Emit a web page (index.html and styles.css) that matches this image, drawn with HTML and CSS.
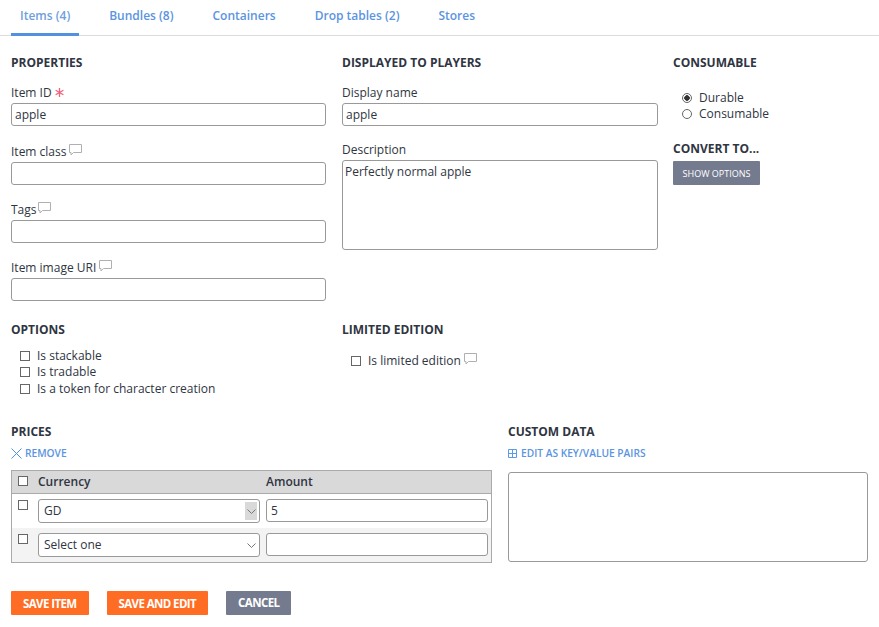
FILE: index.html
```html
<!DOCTYPE html>
<html>
<head>
    <title>Items</title>
    <link rel="stylesheet" href="styles.css">
</head>
<body>
    <nav class="tabs">
        <a class="tab active">Items (4)</a>
        <a class="tab">Bundles (8)</a>
        <a class="tab">Containers</a>
        <a class="tab">Drop tables (2)</a>
        <a class="tab">Stores</a>
    </nav>

    <form class="page">
        <div class="top-grid">
            <section class="col">
                <h3>Properties</h3>
                <div class="field first">
                    <label>Item ID<svg class="star" width="9" height="9" viewBox="0 0 9 9"><path d="M4.500 0v9M.6 2.200l7.800 4.600M8.400 2.200L.6 6.800" stroke="#f4607a" stroke-width="1.300" fill="none"/></svg></label>
                    <input type="text" value="apple">
                </div>
                <div class="field second">
                    <label>Item class<svg class="hint" width="13" height="12" viewBox="0 0 13 12"><path d="M.5.500h12v8H4.500L2 11V8.500H.5z" stroke="#b0b0b0" fill="none"/></svg></label>
                    <input type="text">
                </div>
                <div class="field">
                    <label>Tags<svg class="hint near" width="13" height="12" viewBox="0 0 13 12"><path d="M.5.500h12v8H4.500L2 11V8.500H.5z" stroke="#b0b0b0" fill="none"/></svg></label>
                    <input type="text">
                </div>
                <div class="field">
                    <label>Item image URI<svg class="hint" width="13" height="12" viewBox="0 0 13 12"><path d="M.5.500h12v8H4.500L2 11V8.500H.5z" stroke="#b0b0b0" fill="none"/></svg></label>
                    <input type="text">
                </div>
            </section>

            <section class="col">
                <h3>Displayed to players</h3>
                <div class="field first">
                    <label>Display name</label>
                    <input type="text" value="apple">
                </div>
                <div class="field desc">
                    <label>Description</label>
                    <textarea class="desc-box">Perfectly normal apple</textarea>
                </div>
            </section>

            <section class="col">
                <h3>Consumable</h3>
                <div class="radios">
                    <label class="check"><span class="radio on"></span>Durable</label>
                    <label class="check"><span class="radio"></span>Consumable</label>
                </div>
                <h3 class="convert">Convert to...</h3>
                <button type="button" class="btn grey small">Show options</button>
            </section>
        </div>

        <div class="top-grid options">
            <section class="col">
                <h3>Options</h3>
                <div class="checks">
                    <label class="check"><span class="box"></span>Is stackable</label>
                    <label class="check"><span class="box"></span>Is tradable</label>
                    <label class="check"><span class="box"></span>Is a token for character creation</label>
                </div>
            </section>
            <section class="col">
                <h3>Limited edition</h3>
                <div class="checks limited">
                    <label class="check"><span class="box"></span>Is limited edition<svg class="hint" width="13" height="12" viewBox="0 0 13 12"><path d="M.5.500h12v8H4.500L2 11V8.500H.5z" stroke="#b0b0b0" fill="none"/></svg></label>
                </div>
            </section>
        </div>

        <div class="bottom">
            <section class="prices">
                <h3>Prices</h3>
                <a class="action"><svg width="11" height="11" viewBox="0 0 11 11"><path d="M.5.500l10 10M10.500.500l-10 10" stroke="#4a90ea" fill="none"/></svg>Remove</a>
                <div class="table">
                    <div class="row head">
                        <div class="cell-check"><span class="box"></span></div>
                        <div class="cell-currency">Currency</div>
                        <div class="cell-amount">Amount</div>
                    </div>
                    <div class="row">
                        <div class="cell-check"><span class="box"></span></div>
                        <div class="cell-currency">
                            <div class="select">GD<span class="arrow hover"><svg width="9" height="5" viewBox="0 0 9 5"><path d="M.5.500l4 4 4-4" stroke="#777" fill="none"/></svg></span></div>
                        </div>
                        <div class="cell-amount"><input type="text" value="5"></div>
                    </div>
                    <div class="row alt">
                        <div class="cell-check"><span class="box"></span></div>
                        <div class="cell-currency">
                            <div class="select">Select one<span class="arrow"><svg width="9" height="5" viewBox="0 0 9 5"><path d="M.5.500l4 4 4-4" stroke="#777" fill="none"/></svg></span></div>
                        </div>
                        <div class="cell-amount"><input type="text"></div>
                    </div>
                </div>
            </section>
            <section class="custom">
                <h3>Custom data</h3>
                <a class="action"><svg width="9" height="9" viewBox="0 0 9 9"><path d="M.5.500h8v8h-8zM4.500.500v8M.5 4.500h8" stroke="#5b9be6" fill="none"/></svg>Edit as key/value pairs</a>
                <textarea class="custom-box"></textarea>
            </section>
        </div>

        <div class="buttons">
            <button type="button" class="btn orange">Save item</button>
            <button type="button" class="btn orange">Save and edit</button>
            <button type="button" class="btn grey">Cancel</button>
        </div>
    </form>
</body>
</html>
```

FILE: styles.css
```css
body {
    margin: 0;
    font-family: "Open Sans", sans-serif;
    font-size: 12px;
    line-height: 16px;
    color: #2f3542;
    background: #fff;
}

.tabs {
    display: flex;
    gap: 21px;
    height: 35px;
    padding-left: 11px;
    border-bottom: 1px solid #dcdcdc;
}

.tab {
    box-sizing: border-box;
    height: 36px;
    padding: 8px 9px 0;
    color: #5b94e0;
    font-weight: 600;
}

.tab.active {
    color: #6f9fdc;
    border-bottom: 3px solid #5291e0;
}

.page {
    padding: 0 11px;
}

h3 {
    margin: 0;
    font-size: 12px;
    line-height: 16px;
    font-weight: 700;
    color: #2f3542;
    text-transform: uppercase;
}

.top-grid {
    display: grid;
    grid-template-columns: 331px 331px 1fr;
    padding-top: 19px;
}

.col {
    padding-right: 16px;
}

.col + .col {
    padding-right: 15px;
}

.options {
    padding-top: 21px;
}

.field {
    display: flex;
    flex-direction: column;
    margin-top: 17px;
}

.field.first {
    margin-top: 14px;
}

.field.second {
    margin-top: 18px;
}

.field.desc {
    margin-top: 16px;
}

.field label {
    display: flex;
    align-items: center;
    height: 16px;
    margin-bottom: 2px;
}

.star {
    margin: -1px 0 0 3px;
}

.hint {
    margin: -4px 0 0 3px;
}

.hint.near {
    margin-left: 1px;
}

input[type="text"],
textarea {
    display: block;
    box-sizing: border-box;
    width: 100%;
    height: 23px;
    margin: 0;
    padding: 0 3px;
    border: 1px solid #999;
    border-radius: 3px;
    background: #fff;
    font-family: inherit;
    font-size: 12px;
    color: #2f3542;
    outline: none;
}

textarea {
    padding: 2px;
    resize: none;
}

.desc-box {
    height: 90px;
}

.radios {
    margin: 19px 0 0 9px;
}

.check {
    display: flex;
    align-items: center;
    height: 16px;
}

.radio {
    box-sizing: border-box;
    width: 10px;
    height: 10px;
    margin-right: 7px;
    border: 1px solid #666;
    border-radius: 50%;
    background: #fff;
}

.radio.on {
    background: radial-gradient(circle, #333 0 2.5px, #fff 3px);
}

.convert {
    margin-top: 19px;
}

.btn {
    height: 24px;
    border: none;
    border-radius: 1px;
    font-family: inherit;
    font-size: 11.500px;
    font-weight: 700;
    letter-spacing: -0.6px;
    color: #fff;
    text-transform: uppercase;
    cursor: pointer;
}

.btn.small {
    display: block;
    width: 87px;
    margin-top: 4px;
    padding: 0;
    font-size: 9px;
    font-weight: 400;
    letter-spacing: 0;
}

.grey {
    background: #757b8f;
}

.orange {
    background: #ff6d24;
}

.box {
    display: block;
    box-sizing: border-box;
    width: 10px;
    height: 10px;
    border: 1px solid #666;
    background: #fff;
}

.check .box {
    margin-right: 7px;
}

.checks {
    min-height: 50px;
    margin: 10px 0 0 9px;
}

.checks .check:nth-child(3) {
    margin-top: 1px;
}

.limited {
    min-height: 45px;
    margin-top: 15px;
}

.bottom {
    display: flex;
    gap: 16px;
    padding-top: 26px;
}

.prices {
    width: 481px;
}

.custom {
    width: 360px;
}

.action {
    display: flex;
    align-items: center;
    gap: 3px;
    height: 16px;
    margin-top: 5px;
    color: #5b94e0;
    font-size: 10.200px;
    font-weight: 600;
    text-transform: uppercase;
}

.custom .action {
    gap: 4px;
}

.table {
    box-sizing: border-box;
    height: 93px;
    margin-top: 9px;
    border: 1px solid #aaa;
}

.row {
    display: flex;
    box-sizing: border-box;
    height: 34px;
    padding: 5px 3px 0 0;
}

.row.head {
    align-items: center;
    height: 23px;
    padding: 0 3px 2px 0;
    background: #d9d9d9;
    border-bottom: 1px solid #aaa;
    font-weight: 600;
}

.row.alt {
    background: #f3f3f3;
}

.cell-check {
    display: flex;
    justify-content: center;
    width: 22px;
    margin-right: 4px;
    padding-top: 1px;
}

.head .cell-check {
    padding-top: 0;
}

.cell-currency {
    width: 222px;
    margin-right: 6px;
}

.cell-amount {
    flex: 1;
}

.head .cell-currency,
.head .cell-amount {
    padding-top: 2px;
}

.select {
    display: flex;
    align-items: center;
    justify-content: space-between;
    box-sizing: border-box;
    height: 24px;
    padding: 0 2px 0 5px;
    border: 1px solid #999;
    border-radius: 3px;
    background: #fff;
}

.arrow {
    display: flex;
    align-items: center;
    justify-content: center;
    width: 12px;
    height: 18px;
}

.arrow.hover {
    background: #d9d9d9;
}

.cell-amount input[type="text"] {
    padding-left: 4px;
}

.custom-box {
    height: 90px;
    margin-top: 11px;
}

.buttons {
    display: flex;
    gap: 18px;
    padding-top: 28px;
}

.buttons .btn {
    padding: 0 12px;
}

.buttons .grey {
    padding-bottom: 2px;
}
```
